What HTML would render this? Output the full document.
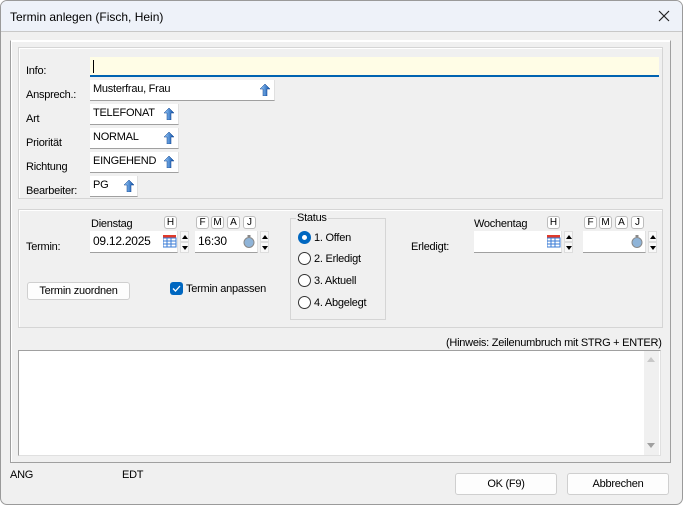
<!DOCTYPE html>
<html><head><meta charset="utf-8"><style>
*{box-sizing:border-box;margin:0;padding:0}
body{width:683px;height:505px;overflow:hidden;background:#fff;font-family:"Liberation Sans",sans-serif;font-size:11px;color:#000;letter-spacing:-0.25px}
.win{position:absolute;left:0;top:0;width:683px;height:505px;background:#f0f0f0;border:1px solid #9a9a9a;border-radius:7px;overflow:hidden}
.title{position:absolute;left:0;top:0;width:681px;height:31px;background:#eef2f9;border-bottom:1px solid #c8c8c8}
.title span{position:absolute;left:9px;top:9px;font-size:12px;letter-spacing:0}
.a{position:absolute}
.grp{position:absolute;border:1px solid #d5d5d5;box-shadow:inset 1px 1px 0 #fff}
.box{position:absolute;background:#fff;border-bottom:1px solid #a0a0a0;border-right:1px solid #e0e0e0;padding:3px 0 0 3px;font-size:11px}
.arr{position:absolute;width:10px;height:12px}
.btn{position:absolute;background:#fdfdfd;border:1px solid #cfcfcf;border-radius:3px;text-align:center;font-size:11px}
.k{position:absolute;width:13px;height:13px;border:1px solid #bdbdbd;border-radius:3px;background:#fff;font-size:10px;text-align:center;line-height:11px;letter-spacing:0}
.sp{position:absolute;width:9px;height:23px}
.sp i{display:block;width:9px;height:11px;background:#f8f8f8;border:1px solid #ddd;position:relative}
.sp i:after{content:"";position:absolute;left:1px;top:3px;border-left:3px solid transparent;border-right:3px solid transparent}
.sp i.u:after{border-bottom:4px solid #000}
.sp i.d:after{border-top:4px solid #000}
.rad{position:absolute;width:13px;height:13px;border:1px solid #333;border-radius:50%;background:#fff}
</style></head><body>
<div class="win">
<div class="title"><span>Termin anlegen (Fisch, Hein)</span>
<svg class="a" style="left:657px;top:9px" width="12" height="12"><path d="M1 1L11 11M11 1L1 11" stroke="#222" stroke-width="1.2"/></svg></div>

<div class="a" style="left:9px;top:39px;width:661px;height:423px;border-top:1px solid #fff;border-left:1px solid #a0a0a0;border-right:1px solid #a0a0a0;border-bottom:1px solid #a0a0a0;box-shadow:inset 1px 1px 0 #fff"></div>

<div class="grp" style="left:17px;top:46px;width:645px;height:152px"></div>
<div class="a" style="left:25px;top:64px">Info:</div>
<div class="a" style="left:89px;top:56px;width:569px;height:20px;background:#fffde6;border-bottom:2px solid #0063b1"><div class="a" style="left:3px;top:3px;width:1px;height:13px;background:#000"></div></div>
<div class="a" style="left:25px;top:88px">Ansprech.:</div>
<div class="box" style="left:89px;top:79px;width:185px;height:21px">Musterfrau, Frau</div>
<div class="a" style="left:25px;top:112px">Art</div>
<div class="box" style="left:89px;top:103px;width:89px;height:21px">TELEFONAT</div>
<div class="a" style="left:25px;top:136px">Priorität</div>
<div class="box" style="left:89px;top:127px;width:89px;height:21px">NORMAL</div>
<div class="a" style="left:25px;top:160px">Richtung</div>
<div class="box" style="left:89px;top:151px;width:89px;height:21px">EINGEHEND</div>
<div class="a" style="left:25px;top:184px">Bearbeiter:</div>
<div class="box" style="left:89px;top:175px;width:48px;height:21px">PG</div>
<svg width="0" height="0" style="position:absolute"><defs><linearGradient id="bg" x1="0" x2="1"><stop offset="0" stop-color="#9fd0ff"/><stop offset="1" stop-color="#0b4fa8"/></linearGradient></defs></svg>
<svg class="arr" style="left:259px;top:83px"><path d="M5 0L10 5H7V12H3V5H0Z" fill="url(#bg)" stroke="#0b3f8a" stroke-width=".5"/></svg>
<svg class="arr" style="left:163px;top:107px"><path d="M5 0L10 5H7V12H3V5H0Z" fill="url(#bg)" stroke="#0b3f8a" stroke-width=".5"/></svg>
<svg class="arr" style="left:163px;top:131px"><path d="M5 0L10 5H7V12H3V5H0Z" fill="url(#bg)" stroke="#0b3f8a" stroke-width=".5"/></svg>
<svg class="arr" style="left:163px;top:155px"><path d="M5 0L10 5H7V12H3V5H0Z" fill="url(#bg)" stroke="#0b3f8a" stroke-width=".5"/></svg>
<svg class="arr" style="left:123px;top:179px"><path d="M5 0L10 5H7V12H3V5H0Z" fill="url(#bg)" stroke="#0b3f8a" stroke-width=".5"/></svg>

<div class="grp" style="left:17px;top:208px;width:645px;height:119px"></div>
<div class="a" style="left:90px;top:217px">Dienstag</div>
<div class="k" style="left:163px;top:215px">H</div>
<div class="k" style="left:195px;top:215px">F</div><div class="k" style="left:210px;top:215px">M</div><div class="k" style="left:226px;top:215px">A</div><div class="k" style="left:242px;top:215px">J</div>
<div class="a" style="left:25px;top:240px">Termin:</div>
<div class="box" style="left:89px;top:230px;width:88px;height:22px;font-size:12px">09.12.2025</div>
<svg class="a" style="left:162px;top:234px" width="14" height="13"><rect x="0" y="0" width="13" height="3" fill="#e03a2a"/><rect x="0" y="3" width="13" height="9" fill="#fff" stroke="#3a7bd5"/><path d="M0 6H13M0 9H13M4 3V12M8 3V12" stroke="#3a7bd5"/></svg>
<div class="sp" style="left:179px;top:230px"><i class="u"></i><i class="d"></i></div>
<div class="box" style="left:194px;top:230px;width:63px;height:22px;font-size:12px">16:30</div>
<svg class="a" style="left:242px;top:234px" width="12" height="13"><circle cx="6" cy="7.5" r="5" fill="#8fb4d8" stroke="#888"/><rect x="4.5" y="0" width="3" height="2" fill="#888"/></svg>
<div class="sp" style="left:259px;top:230px"><i class="u"></i><i class="d"></i></div>
<div class="btn" style="left:26px;top:281px;width:103px;height:18px;line-height:16px">Termin zuordnen</div>
<div class="a" style="left:169px;top:281px;width:13px;height:13px;background:#0067c0;border-radius:3px"><svg width="13" height="13"><path d="M3 6.5L5.5 9L10 4" stroke="#fff" stroke-width="1.3" fill="none"/></svg></div>
<div class="a" style="left:185px;top:282px">Termin anpassen</div>

<div class="a" style="left:289px;top:217px;width:96px;height:102px;border:1px solid #d5d5d5"></div>
<div class="a" style="left:295px;top:211px;background:#f0f0f0;padding:0 1px">Status</div>
<div class="rad" style="left:297px;top:230px;border:4px solid #0067c0"></div><div class="a" style="left:313px;top:231px">1. Offen</div>
<div class="rad" style="left:297px;top:251px"></div><div class="a" style="left:313px;top:252px">2. Erledigt</div>
<div class="rad" style="left:297px;top:273px"></div><div class="a" style="left:313px;top:274px">3. Aktuell</div>
<div class="rad" style="left:297px;top:295px"></div><div class="a" style="left:313px;top:296px">4. Abgelegt</div>

<div class="a" style="left:473px;top:217px">Wochentag</div>
<div class="k" style="left:546px;top:215px">H</div>
<div class="k" style="left:583px;top:215px">F</div><div class="k" style="left:598px;top:215px">M</div><div class="k" style="left:614px;top:215px">A</div><div class="k" style="left:630px;top:215px">J</div>
<div class="a" style="left:410px;top:240px">Erledigt:</div>
<div class="box" style="left:473px;top:230px;width:88px;height:22px"></div>
<svg class="a" style="left:546px;top:234px" width="14" height="13"><rect x="0" y="0" width="13" height="3" fill="#e03a2a"/><rect x="0" y="3" width="13" height="9" fill="#fff" stroke="#3a7bd5"/><path d="M0 6H13M0 9H13M4 3V12M8 3V12" stroke="#3a7bd5"/></svg>
<div class="sp" style="left:563px;top:230px"><i class="u"></i><i class="d"></i></div>
<div class="box" style="left:582px;top:230px;width:63px;height:22px"></div>
<svg class="a" style="left:630px;top:234px" width="12" height="13"><circle cx="6" cy="7.5" r="5" fill="#8fb4d8" stroke="#888"/><rect x="4.5" y="0" width="3" height="2" fill="#888"/></svg>
<div class="sp" style="left:647px;top:230px"><i class="u"></i><i class="d"></i></div>

<div class="a" style="left:445px;top:336px">(Hinweis: Zeilenumbruch mit STRG + ENTER)</div>
<div class="a" style="left:17px;top:349px;width:643px;height:106px;background:#fff;border:1px solid #a0a0a0;border-right-color:#e0e0e0;border-bottom-color:#e0e0e0"></div>
<div class="a" style="left:643px;top:350px;width:15px;height:104px;background:#f0f0f0"></div>
<div class="a" style="left:646px;top:442px;border-left:4px solid transparent;border-right:4px solid transparent;border-top:5px solid #a0a0a0"></div>
<div class="a" style="left:646px;top:356px;border-left:4px solid transparent;border-right:4px solid transparent;border-bottom:5px solid #c8c8c8"></div>

<div class="a" style="left:9px;top:468px">ANG</div>
<div class="a" style="left:121px;top:468px">EDT</div>
<div class="btn" style="left:454px;top:472px;width:102px;height:22px;line-height:20px">OK (F9)</div>
<div class="btn" style="left:566px;top:472px;width:102px;height:22px;line-height:20px">Abbrechen</div>
</div>
</body></html>
